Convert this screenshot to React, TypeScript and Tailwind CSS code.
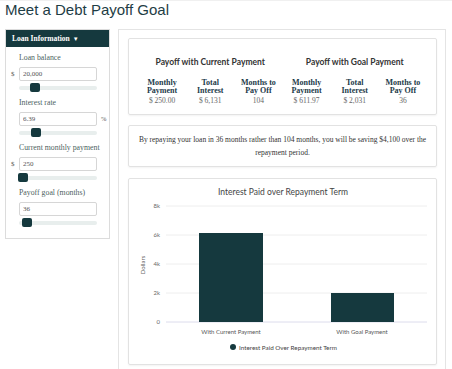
const teal = '#15393e';

const fields = [
  { label: 'Loan balance', value: '20,000', prefix: '$', suffix: '', thumb: 'left-[11px]' },
  { label: 'Interest rate', value: '6.39', prefix: '', suffix: '%', thumb: 'left-[12px]' },
  { label: 'Current monthly payment', value: '250', prefix: '$', suffix: '', thumb: 'left-[-1px]' },
  { label: 'Payoff goal (months)', value: '36', prefix: '', suffix: '', thumb: 'left-[3px]' },
];

const groups = [
  {
    title: 'Payoff with Current Payment',
    cols: [
      { l1: 'Monthly', l2: 'Payment', v: '$ 250.00' },
      { l1: 'Total', l2: 'Interest', v: '$ 6,131' },
      { l1: 'Months to', l2: 'Pay Off', v: '104' },
    ],
  },
  {
    title: 'Payoff with Goal Payment',
    cols: [
      { l1: 'Monthly', l2: 'Payment', v: '$ 611.97' },
      { l1: 'Total', l2: 'Interest', v: '$ 2,031' },
      { l1: 'Months to', l2: 'Pay Off', v: '36' },
    ],
  },
];

function LoanPanel() {
  return (
    <div className="w-[105px] self-start border border-[#dcdcdc] bg-white">
      {/* header */}
      <div className="h-[17px] bg-[#15393e] flex items-center px-[6px] gap-[3px]">
        <span className="text-[7.5px] font-bold text-white leading-none">Loan Information</span>
        <span className="text-[6px] text-white leading-none">▼</span>
      </div>

      <div className="pl-[5px] pt-[6px] pb-[11px] flex flex-col gap-[6px]">
        {fields.map((f) => (
          <div key={f.label}>
            <div className="pl-[8px] h-[10px] leading-[10px] text-[7.8px] text-[#4d5f61] whitespace-nowrap">{f.label}</div>
            <div className="mt-[4px] flex items-center h-[14px]">
              <span className="w-[8px] text-[7px] text-[#555]">{f.prefix}</span>
              <input
                readOnly
                value={f.value}
                className="w-[78px] h-[14px] border border-[#d6d6d6] rounded-[2px] pl-[3px] text-[7px] text-[#555] outline-none"
              />
              <span className="ml-[4px] text-[6.5px] text-[#555]">{f.suffix}</span>
            </div>
            <div className="relative ml-[8px] mt-[2px] w-[78px] h-[9px] flex items-center">
              <div className="w-full h-[4px] rounded-full bg-[#e8eeed]" />
              <div className={`absolute top-0 ${f.thumb} w-[10px] h-[9px] rounded-[2px] bg-[#15393e]`} />
            </div>
          </div>
        ))}
      </div>
    </div>
  );
}

function Chart() {
  const ys = [27, 56, 85, 114, 143];
  const ticks = ['8k', '6k', '4k', '2k', '0'];
  return (
    <svg width="307" height="185" className="block">
      <text x="154" y="16" textAnchor="middle" fontSize="8.5" fill="#444" fontFamily="Lato, sans-serif">
        Interest Paid over Repayment Term
      </text>
      {ys.map((y, i) => (
        <g key={y}>
          <line x1="37" x2="298" y1={y} y2={y} stroke={i === 4 ? '#dcdcec' : '#eeeeee'} strokeWidth="1" />
          <text x="31" y={y + 2} textAnchor="end" fontSize="6" fill="#666" fontFamily="Lato, sans-serif">
            {ticks[i]}
          </text>
        </g>
      ))}
      <text
        transform="translate(16 86) rotate(-90)"
        textAnchor="middle"
        fontSize="6"
        fill="#666"
        fontFamily="Lato, sans-serif"
      >
        Dollars
      </text>
      <rect x="70" y="54" width="64" height="89" fill={teal} />
      <rect x="202" y="114" width="63" height="29" fill={teal} />
      <text x="102" y="155" textAnchor="middle" fontSize="6" fill="#555" fontFamily="Lato, sans-serif">
        With Current Payment
      </text>
      <text x="233" y="155" textAnchor="middle" fontSize="6" fill="#555" fontFamily="Lato, sans-serif">
        With Goal Payment
      </text>
      <circle cx="104" cy="168" r="3" fill={teal} />
      <text x="110" y="170.5" fontSize="6.3" fill="#444" fontFamily="Lato, sans-serif">
        Interest Paid Over Repayment Term
      </text>
    </svg>
  );
}

export default function App() {
  return (
    <div className="w-[452px] h-[369px] overflow-hidden bg-white border-t border-[#f0f0f0] font-['Liberation_Serif',serif]">
      <h1 className="pl-[5px] text-[15px] leading-[17px] text-[#1e3d45] font-['Liberation_Sans',sans-serif]">
        Meet a Debt Payoff Goal
      </h1>

      <div className="mt-[11px] pl-[5px] flex gap-[8px]">
        <LoanPanel />

        <div className="w-[328px] h-[360px] border border-[#e4e4e4] pl-[9px] pr-[8px] pt-[8px]">
          {/* summary */}
          <div className="h-[77px] border border-[#e2e2e2] rounded-[2px] shadow-[0_1px_2px_rgba(0,0,0,0.05)] px-[9px] pt-[18px] grid grid-cols-2">
            {groups.map((g) => (
              <div key={g.title}>
                <div className="text-center font-['Lato',sans-serif] font-bold text-[8.5px] leading-[10px] text-[#333]">
                  {g.title}
                </div>
                <div className="mt-[12px] grid grid-cols-3">
                  {g.cols.map((c) => (
                    <div key={c.l1} className="text-center">
                      <div className="text-[8px] leading-[8px] font-bold text-[#1d3b4a]">
                        {c.l1}
                        <br />
                        {c.l2}
                      </div>
                      <div className="mt-[1px] text-[7.5px] leading-[10px] text-[#666]">{c.v}</div>
                    </div>
                  ))}
                </div>
              </div>
            ))}
          </div>

          {/* message */}
          <div className="mt-[10px] h-[42px] border border-[#e2e2e2] rounded-[2px] shadow-[0_1px_2px_rgba(0,0,0,0.05)] flex items-center justify-center text-center whitespace-nowrap text-[7.5px] leading-[13px] text-[#333]">
            <p>
              By repaying your loan in 36 months rather than 104 months, you will be saving $4,100 over the
              <br />
              repayment period.
            </p>
          </div>

          {/* chart */}
          <div className="mt-[11px] h-[187px] border border-[#e2e2e2] rounded-[2px] shadow-[0_1px_2px_rgba(0,0,0,0.05)]">
            <Chart />
          </div>
        </div>
      </div>
    </div>
  );
}
